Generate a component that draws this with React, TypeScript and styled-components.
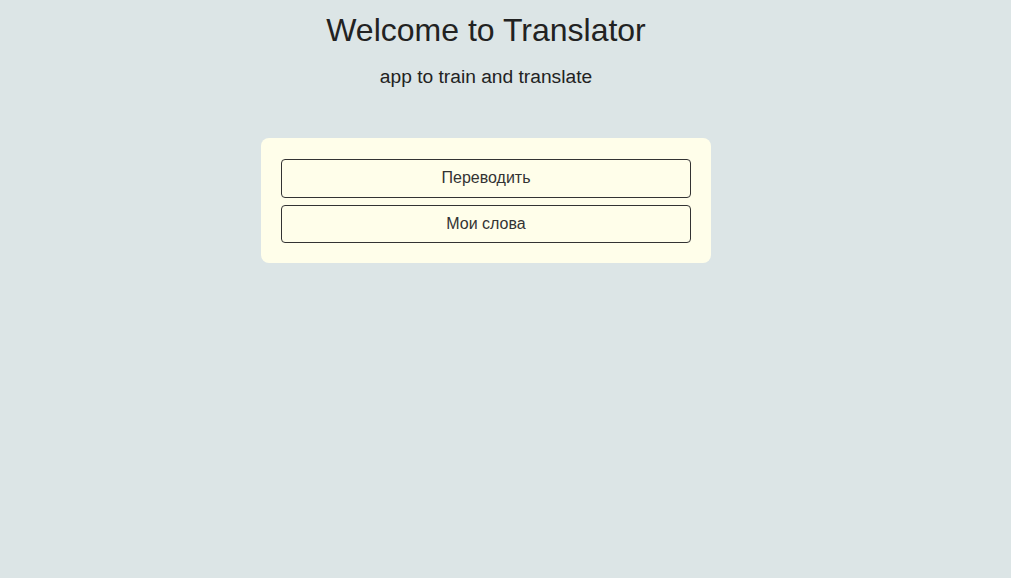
import React from "react";
import styled, { createGlobalStyle } from "styled-components";

const GlobalStyle = createGlobalStyle`
  html, body {
    margin: 0;
    padding: 0;
    background-color: #dce5e6;
    font-family: "Liberation Sans", Arial, sans-serif;
    color: #222;
  }
`;

const Page = styled.div`
  display: flex;
  flex-direction: column;
  align-items: center;
  width: 972px;
  min-height: 578px;
  padding-top: 12px;
  box-sizing: border-box;
`;

const Title = styled.h1`
  margin: 0;
  font-size: 32px;
  font-weight: 400;
  line-height: 37px;
`;

const Subtitle = styled.h3`
  margin: 17px 0 0;
  font-size: 19.2px;
  font-weight: 400;
  line-height: 22px;
`;

const Card = styled.div`
  display: flex;
  flex-direction: column;
  gap: 7px;
  width: 450px;
  box-sizing: border-box;
  margin-top: 50px;
  padding: 21px 20px 20px;
  background-color: #fffeea;
  border-radius: 8px;
`;

const Button = styled.button`
  height: 38.5px;
  border: 1px solid #333;
  border-radius: 4px;
  background-color: #fffeea;
  color: #333;
  font-family: "Liberation Sans", Arial, sans-serif;
  font-size: 16px;
  cursor: pointer;
`;

export default function App() {
  return (
    <>
      <GlobalStyle />
      <Page>
        <Title>Welcome to Translator</Title>
        <Subtitle>app to train and translate</Subtitle>
        <Card>
          <Button>Переводить</Button>
          <Button>Мои слова</Button>
        </Card>
      </Page>
    </>
  );
}
